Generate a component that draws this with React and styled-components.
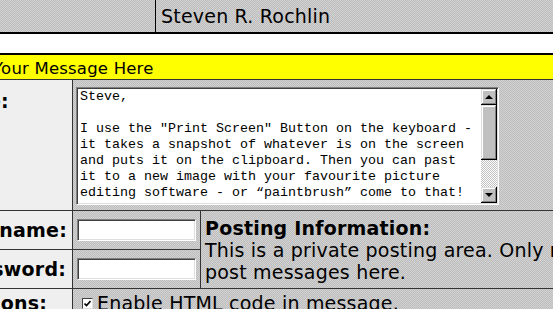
import styled, { createGlobalStyle } from "styled-components";

const GlobalStyle = createGlobalStyle`
  html, body {
    margin: 0;
    padding: 0;
    background: #ffffff;
    overflow: hidden;
  }
  body {
    font-family: "DejaVu Sans", Verdana, sans-serif;
    letter-spacing: 0.2px;
    color: #000;
  }
`;

const dither = `
  background-color: #c6c6c6;
  background-image: repeating-conic-gradient(#bdbdbd 0 25%, #d2d2d2 0 50%);
  background-size: 2px 2px;
`;

const bevelOut = `
  background: #c0c0c0;
  box-shadow: inset -1px -1px #000, inset 1px 1px #dfdfdf,
    inset -2px -2px #808080, inset 2px 2px #fff;
`;

// the page is scrolled sideways, so the whole table starts left of the window
const Page = styled.div`
  margin-left: -100px;
  width: 1200px;
`;

const Header = styled.div`
  display: flex;
  height: 32px;
  border-bottom: 2px solid #000;
  ${dither}
`;

const HeaderSide = styled.div`
  box-sizing: border-box;
  width: 256px;
  border-right: 1px solid #000;
`;

const HeaderName = styled.div`
  flex: 1;
  padding: 5px 0 0 5px;
  font-size: 19px;
  line-height: 22px;
`;

const Gap = styled.div`
  height: 19px;
  border-bottom: 2px solid #000;
`;

const Banner = styled.div`
  height: 24px;
  background: #ffff00;
  padding: 3px 0 0 93px;
  box-sizing: border-box;
  font-size: 16.5px;
  line-height: 22px;
  white-space: nowrap;
  overflow: hidden;
`;

const FormGrid = styled.div`
  display: grid;
  grid-template-columns: 172px 127px 1fr;
  grid-template-rows: 130px 38px 38px 40px;
  gap: 1px;
  background: #333;
  border-top: 1px solid #333;
`;

const Label = styled.div`
  background: #efefef;
  font-size: 19px;
  font-weight: bold;
  line-height: 22px;
  white-space: nowrap;
  display: flex;
  justify-content: ${(p) => (p.$start ? "flex-start" : "flex-end")};
  align-items: ${(p) => (p.$top ? "flex-start" : "center")};
  padding: ${(p) => p.$pad || "0 5px 0 0"};
`;

const Cell = styled.div`
  ${dither}
  grid-column: ${(p) => p.$span || "auto"};
  display: flex;
  align-items: ${(p) => (p.$top ? "flex-start" : "center")};
  padding: ${(p) => p.$pad || "0 0 0 4px"};
  font-size: 19px;
  line-height: 22px;
  white-space: nowrap;
`;

const Info = styled.div`
  ${dither}
  grid-row: span 2;
  padding: 6px 4px 0;
  font-size: 19px;
  line-height: 22px;
  white-space: nowrap;
  h4 {
    margin: 0;
    font-size: 19px;
    font-weight: bold;
  }
`;

const TextBox = styled.div`
  display: flex;
  width: 423px;
  height: 118px;
  box-sizing: border-box;
  background: #fff;
  border: 1px solid;
  border-color: #808080 #fff #fff #808080;
  box-shadow: inset 1px 1px #404040, inset -1px -1px #dfdfdf;
  padding: 1px;
`;

const Text = styled.div`
  flex: 1;
  padding: 0 2px;
  font-family: "Liberation Mono", "Courier New", monospace;
  font-size: 13.33px;
  letter-spacing: 0;
  line-height: 16px;
  white-space: pre;
  overflow: hidden;
`;

const Scrollbar = styled.div`
  width: 16px;
  display: flex;
  flex-direction: column;
`;

const ArrowBtn = styled.div`
  ${bevelOut}
  height: 16px;
  display: flex;
  align-items: center;
  justify-content: center;
  &::after {
    content: "";
    border-left: 4px solid transparent;
    border-right: 4px solid transparent;
    ${(p) => (p.$down ? "border-top: 4px solid #000;" : "border-bottom: 4px solid #000;")}
  }
`;

const Thumb = styled.div`
  ${bevelOut}
  height: 55px;
`;

const Track = styled.div`
  flex: 1;
  background-color: #e0e0e0;
  background-image: repeating-conic-gradient(#c0c0c0 0 25%, #ffffff 0 50%);
  background-size: 2px 2px;
`;

const Field = styled.input`
  box-sizing: border-box;
  width: 119px;
  height: 22px;
  margin: 0;
  padding: 0 2px;
  background: #fff;
  border: 1px solid;
  border-color: #808080 #fff #fff #808080;
  box-shadow: inset 1px 1px #404040, inset -1px -1px #dfdfdf;
  outline: none;
`;

const Check = styled.span`
  display: inline-flex;
  align-items: center;
  justify-content: center;
  box-sizing: border-box;
  width: 11px;
  height: 11px;
  margin: 6px 4px 0 5px;
  background: #fff;
  border: 1px solid #404040;
  border-right-color: #dfdfdf;
  border-bottom-color: #dfdfdf;
`;

const message = `Steve,

I use the "Print Screen" Button on the keyboard -
it takes a snapshot of whatever is on the screen
and puts it on the clipboard. Then you can past
it to a new image with your favourite picture
editing software - or “paintbrush” come to that!`;

const App = () => {
  return (
    <Page>
      <GlobalStyle />
      <Header>
        <HeaderSide />
        <HeaderName>Steven R. Rochlin</HeaderName>
      </Header>
      <Gap />
      <Banner>Your Message Here</Banner>
      <FormGrid>
        <Label $start $top $pad="10px 0 0 6px">Message:</Label>
        <Cell $span="span 2" $top $pad="7px 0 0 3px">
          <TextBox>
            <Text>{message}</Text>
            <Scrollbar>
              <ArrowBtn />
              <Thumb />
              <Track />
              <ArrowBtn $down />
            </Scrollbar>
          </TextBox>
        </Cell>
        <Label>Username:</Label>
        <Cell>
          <Field type="text" />
        </Cell>
        <Info>
          <h4>Posting Information:</h4>
          This is a private posting area. Only registered users and moderators may
          <br />
          post messages here.
        </Info>
        <Label $pad="0 6px 0 0">Password:</Label>
        <Cell>
          <Field type="password" />
        </Cell>
        <Label $top $pad="3px 25px 0 0">Options:</Label>
        <Cell $span="span 2" $top $pad="3px 0 0 4px">
          <Check>
            <svg width="7" height="7" viewBox="0 0 7 7">
              <path d="M0.5 3.5 L2.5 5.5 L6.5 1" stroke="#000" strokeWidth="1.6" fill="none" />
            </svg>
          </Check>
          Enable HTML code in message.
        </Cell>
      </FormGrid>
    </Page>
  );
};

export default App;
